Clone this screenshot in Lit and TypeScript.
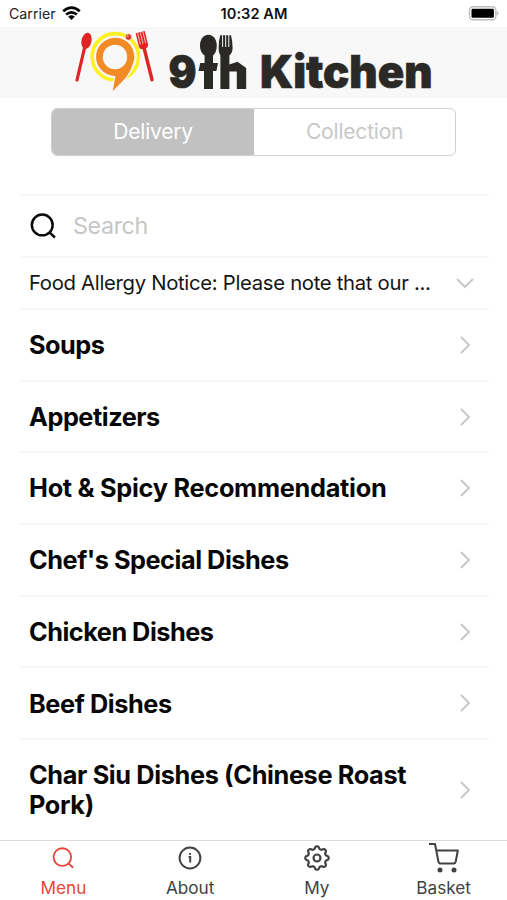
import { LitElement, html, css, svg } from "lit";
import { customElement } from "lit/decorators.js";
import { classMap } from "lit/directives/class-map.js";

const CATEGORIES = [
  { name: "Soups", spacing: -0.5 },
  { name: "Appetizers", spacing: -0.47 },
  { name: "Hot & Spicy Recommendation", spacing: -0.27 },
  { name: "Chef's Special Dishes", spacing: -0.46 },
  { name: "Chicken Dishes", spacing: -0.5 },
  { name: "Beef Dishes", spacing: -0.4 },
  { name: "Char Siu Dishes (Chinese Roast Pork)", spacing: -0.36, tall: true },
];

const gearPath = (() => {
  const pts: string[] = [];
  const n = 8;
  for (let i = 0; i < 96; i++) {
    const a = (i / 96) * Math.PI * 2;
    const w = Math.cos(n * a);
    const r = 9.6 + 1.3 * Math.tanh(w * 1.6);
    pts.push(`${(12 + r * Math.sin(a)).toFixed(2)} ${(12 - r * Math.cos(a)).toFixed(2)}`);
  }
  return `M${pts.join("L")}Z`;
})();

const ICONS = {
  search: svg`<circle cx="11.3" cy="11" r="9.6"/><path d="M18 17.8L23 22.6"/>`,
  info: svg`<circle cx="12" cy="12" r="10.4"/><path d="M10.6 11h1.6v5.6M12 7v1.8"/>`,
  gear: svg`<path d=${gearPath} stroke-linejoin="round"/><circle cx="12" cy="12" r="3.2"/>`,
};

@customElement("kitchen-logo")
export class KitchenLogo extends LitElement {
  static styles = css`
    :host { display: block; width: 507px; height: 71px; }
    svg { display: block; }
    .word { font: 900 45px Inter, sans-serif; fill: #2b2926; stroke: #2b2926; stroke-width: .7; }
  `;
  render() {
    return html`<svg width="507" height="71" viewBox="0 27 507 71">
      <ellipse cx="86.5" cy="40.8" rx="5" ry="8.2" transform="rotate(12 86.5 40.8)" fill="#df2424" />
      <path d="M84.5 48L77 80" stroke="#df2424" stroke-width="3.2" stroke-linecap="round" />
      <circle cx="115.3" cy="56.8" r="23.2" fill="none" stroke="#fff01f" stroke-width="3.6" />
      <path d="M111.6 93.5L114.6 76.6A19.8 19.8 0 1 1 133.6 64C130 77 121 83 111.6 93.5Z" fill="#f28a25" stroke="#f8f8f8" stroke-width="1.4" />
      <circle cx="115" cy="57" r="12.2" fill="#f8f8f8" />
      <circle cx="128.5" cy="37" r="3.2" fill="#e2342e" stroke="#f8f8f8" stroke-width=".6" />
      <circle cx="127.7" cy="36.2" r="1" fill="#f5a398" />
      <g transform="rotate(-14 142 40)">
        <path d="M137.4 32H146.8V45Q146.8 48.5 143.8 49H140.4Q137.4 48.5 137.4 45Z" fill="#df2424" />
        <path d="M139.4 32V44M142.1 32V44M144.8 32V44" stroke="#f8d9d5" stroke-width=".8" />
        <path d="M142.1 48v33" stroke="#df2424" stroke-width="3.4" stroke-linecap="round" />
      </g>
      <text class="word" x="168.5" y="88.3" textLength="28" lengthAdjust="spacingAndGlyphs">9</text>
      <text class="word" x="260" y="88.3" textLength="172.5" lengthAdjust="spacingAndGlyphs">Kitchen</text>
      <g fill="#2b2926">
        <path d="M208.3 34.8C203 34.8 200 40 200 45.5C200 50.5 202 53.5 204.6 55.5V63H200.2L198.6 71H204V89H213V71H216.4L218 63H213V55.5C215.5 53.5 216.8 50.3 216.8 45.5C216.8 40 213.8 34.8 208.3 34.8Z" />
        <path d="M220.2 35.2H231Q232.6 41 232.6 48Q232.6 53 229.4 55.5V64.5L237.5 61.8L246.2 68V89H236.8V71.5H229.4V89H220.4V55.5Q218.4 52.5 218.6 48Q218.6 41 220.2 35.2Z" />
      </g>
      <path d="M222.6 35V47M225.7 35V47M228.8 35V47" stroke="#f8f8f8" stroke-width="1" />
    </svg>`;
  }
}

@customElement("category-row")
export class CategoryRow extends LitElement {
  static properties = {
    name: {},
    spacing: { type: Number },
    tall: { type: Boolean },
  };
  declare name: string;
  declare spacing: number;
  declare tall: boolean;
  static styles = css`
    :host { display: block; }
    .row {
      display: flex; align-items: center; justify-content: space-between;
      box-sizing: border-box; height: 71.7px; padding: 1px 18px 0 9px;
      border-bottom: 2px solid #f7f7f7; color: #070707;
    }
    .tall { height: 100px; border-bottom: 0; padding-top: 0; }
    .label { max-width: 395px; font: 700 25.3px/30.5px Inter, sans-serif; }
    svg { fill: none; stroke: #c8c8c8; stroke-width: 2; margin-bottom: 1px; }
  `;
  render() {
    return html`<div class=${classMap({ row: true, tall: this.tall })}>
      <span class="label" style="letter-spacing:${this.spacing}px">${this.name}</span>
      <svg width="12" height="18" viewBox="0 0 12 18"><path d="M2 1l8 8-8 8" /></svg>
    </div>`;
  }
}

@customElement("app-root")
export class AppRoot extends LitElement {
  static styles = css`
    :host {
      display: flex; flex-direction: column; width: 507px; height: 900px;
      overflow: hidden; background: #fff; font-family: Inter, sans-serif; color: #111;
    }
    svg { flex: none; }
    .status {
      display: grid; grid-template-columns: 1fr auto 1fr; align-items: center; flex: none;
      height: 27px; box-sizing: border-box; padding: 0 8px 0 9px; color: #222;
    }
    .carrier { display: flex; align-items: center; gap: 6px; font-size: 14.2px; }
    .time { font-weight: 600; font-size: 14.6px; letter-spacing: 0.05px; color: #111; }
    .battery { justify-self: end; }
    .brand { flex: none; height: 71px; background: #f8f8f8; }
    .toggle {
      display: flex; flex: none; width: 405px; height: 48px; margin: 10px 0 0 51.4px;
      box-sizing: border-box; border: 1.5px solid #d0d0d0; border-radius: 6px; overflow: hidden;
    }
    .choice {
      flex: 1; display: flex; align-items: center; justify-content: center; padding-bottom: 1px;
      font-size: 21px; letter-spacing: -0.2px; color: #c8c8c8;
    }
    .chosen { background: #c1c1c1; color: #fff; }
    .list { flex: 1; min-height: 0; margin: 38px 18px 0 20px; }
    .search {
      display: flex; align-items: center; gap: 17px; height: 60px; padding-left: 10px;
      border-top: 2px solid #f7f7f7;
      border-bottom: 2px solid #f7f7f7; font-size: 23.3px; letter-spacing: -0.4px; color: #c6c6c6;
    }
    .search span { padding-bottom: 2px; }
    .line { fill: none; stroke: currentColor; stroke-width: 2; }
    .search .line { color: #0a0a0a; stroke-width: 2.3; }
    .notice {
      display: flex; align-items: center; justify-content: space-between; height: 50px;
      padding: 0 14px 0 9px; border-bottom: 2px solid #f7f7f7;
      font-size: 20.3px; letter-spacing: -0.3px; color: #151515; white-space: nowrap;
    }
    .notice .line { color: #c8c8c8; margin-bottom: 1px; }
    .notice span { padding-bottom: 1px; }
    .tabs {
      display: grid; grid-template-columns: repeat(4, 1fr); flex: none; height: 60px;
      box-sizing: border-box; border-top: 1px solid #dcdcdc; background: #fff;
    }
    .tab {
      display: flex; flex-direction: column; align-items: center;
      font-size: 17.2px; color: #424242;
    }
    .glyph { display: flex; align-items: center; justify-content: center; height: 33px; }
    .caption { line-height: 27px; }
    .active { color: #e8453a; }
  `;

  private tab(icon: unknown, label: string, active = false) {
    return html`<div class=${classMap({ tab: true, active })}>
      <span class="glyph">${icon}</span><span class="caption">${label}</span>
    </div>`;
  }

  private icon(shape: unknown, size: number) {
    return html`<svg class="line" width=${size} height=${size} viewBox="0 0 24 24">${shape}</svg>`;
  }

  render() {
    return html`
      <div class="status">
        <span class="carrier">Carrier
          <svg width="19" height="15" viewBox="0 0 19 15" fill="none" stroke="#050505" stroke-width="2.6">
            <path d="M1.2 5.2Q9.5-2.1 17.8 5.2M4.1 8.6Q9.5 4 14.9 8.6" />
            <path d="M6.2 10.7Q9.5 8 12.8 10.7L9.5 14Z" fill="#050505" stroke="none" />
          </svg>
        </span>
        <span class="time">10:32 AM</span>
        <svg class="battery" width="31" height="15" viewBox="0 0 31 15">
          <rect x="1.5" y=".8" width="26.4" height="13" rx="3.5" fill="#fff" stroke="#bdbdbd" stroke-width="1.4" />
          <rect x="3.5" y="2.8" width="22.4" height="9" rx="1.2" fill="#000" />
          <path d="M29 5l1.5 2.3-1.5 2.3z" fill="#aaa" />
        </svg>
      </div>
      <div class="brand"><kitchen-logo></kitchen-logo></div>
      <div class="toggle"><span class="choice chosen">Delivery</span><span class="choice">Collection</span></div>
      <div class="list">
        <div class="search">${this.icon(ICONS.search, 26)}<span>Search</span></div>
        <div class="notice">
          <span>Food Allergy Notice: Please note that our ...</span>
          <svg class="line" width="20" height="12" viewBox="0 0 20 12"><path d="M2 2l8 8 8-8" /></svg>
        </div>
        ${CATEGORIES.map((c) => html`<category-row .name=${c.name} .spacing=${c.spacing} .tall=${!!c.tall}></category-row>`)}
      </div>
      <div class="tabs">
        ${this.tab(this.icon(ICONS.search, 22), "Menu", true)}
        ${this.tab(this.icon(ICONS.info, 24), "About")}
        ${this.tab(this.icon(ICONS.gear, 26), "My")}
        ${this.tab(html`<svg class="line" width="32" height="31" viewBox="0 0 32 31">
          <path d="M1 2H7L10.4 19.5Q10.8 21.5 12.8 21.5H25.5Q27.3 21.5 27.7 19.7L29.8 8.5H8.3" stroke-linejoin="round" />
          <circle cx="12" cy="28" r="2.5" fill="currentColor" stroke="none" />
          <circle cx="26" cy="28" r="2.5" fill="currentColor" stroke="none" />
        </svg>`, "Basket")}
      </div>`;
  }
}
